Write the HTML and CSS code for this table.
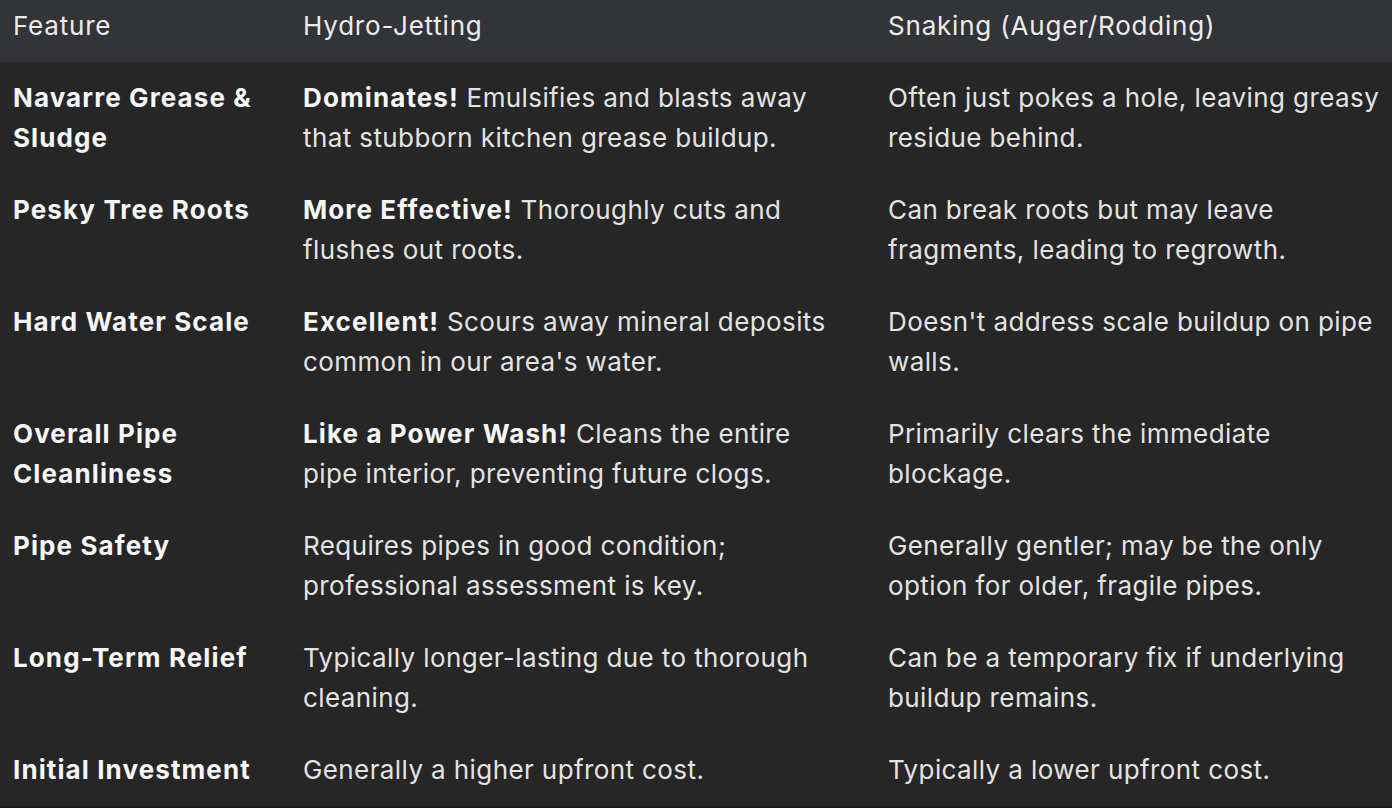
FILE: index.html
```html
<!DOCTYPE html>
<html lang="en">
<head>
<meta charset="utf-8">
<title>Hydro-Jetting vs Snaking</title>
<link rel="stylesheet" href="styles.css">
</head>
<body>
<table class="cmp">
  <colgroup>
    <col class="c1"><col class="c2"><col class="c3">
  </colgroup>
  <thead>
    <tr><th>Feature</th><th class="mid">Hydro-Jetting</th><th>Snaking (Auger/Rodding)</th></tr>
  </thead>
  <tbody>
    <tr><td class="f">Navarre Grease &amp; Sludge</td><td class="mid"><b>Dominates!</b> Emulsifies and blasts away that stubborn kitchen grease buildup.</td><td>Often just pokes a hole, leaving greasy residue behind.</td></tr>
    <tr><td class="f">Pesky Tree Roots</td><td class="mid"><b>More Effective!</b> Thoroughly cuts and flushes out roots.</td><td>Can break roots but may leave fragments, leading to regrowth.</td></tr>
    <tr><td class="f">Hard Water Scale</td><td class="mid"><b>Excellent!</b> Scours away mineral deposits common in our area's water.</td><td>Doesn't address scale buildup on pipe walls.</td></tr>
    <tr><td class="f">Overall Pipe Cleanliness</td><td class="mid"><b>Like a Power Wash!</b> Cleans the entire pipe interior, preventing future clogs.</td><td>Primarily clears the immediate blockage.</td></tr>
    <tr><td class="f">Pipe Safety</td><td class="mid">Requires pipes in good condition; professional assessment is key.</td><td>Generally gentler; may be the only option for older, fragile pipes.</td></tr>
    <tr><td class="f">Long-Term Relief</td><td class="mid">Typically longer-lasting due to thorough cleaning.</td><td>Can be a temporary fix if underlying buildup remains.</td></tr>
    <tr><td class="f">Initial Investment</td><td class="mid">Generally a higher upfront cost.</td><td>Typically a lower upfront cost.</td></tr>
  </tbody>
</table>
</body>
</html>
```

FILE: styles.css
```css
html, body {
  margin: 0;
  padding: 0;
  background: #262626;
}
body {
  overflow: hidden;
  height: 808px;
}
.cmp {
  width: 1392px;
  border-collapse: collapse;
  table-layout: fixed;
  font-family: Inter, Roboto, sans-serif;
  font-size: 26px;
  line-height: 40px;
  letter-spacing: 0.4px;
  color: #e3e3e3;
  border-bottom: 2px solid #1c1c1c;
}
.c1 { width: 290px; }
.c2 { width: 585px; }
.c3 { width: 517px; }
.cmp th {
  background: #333437;
  font-weight: 400;
  letter-spacing: 0.8px;
  color: #ececec;
  text-align: left;
  vertical-align: top;
  padding: 6px 8px 16px 13px;
}
.cmp td {
  padding: 16px 8px 16px 13px;
  vertical-align: top;
  text-align: left;
}
.cmp .mid {
  padding-right: 44px;
}
.cmp b, .cmp td.f {
  font-weight: 700;
  letter-spacing: 1.1px;
  color: #f6f6f6;
}
```
